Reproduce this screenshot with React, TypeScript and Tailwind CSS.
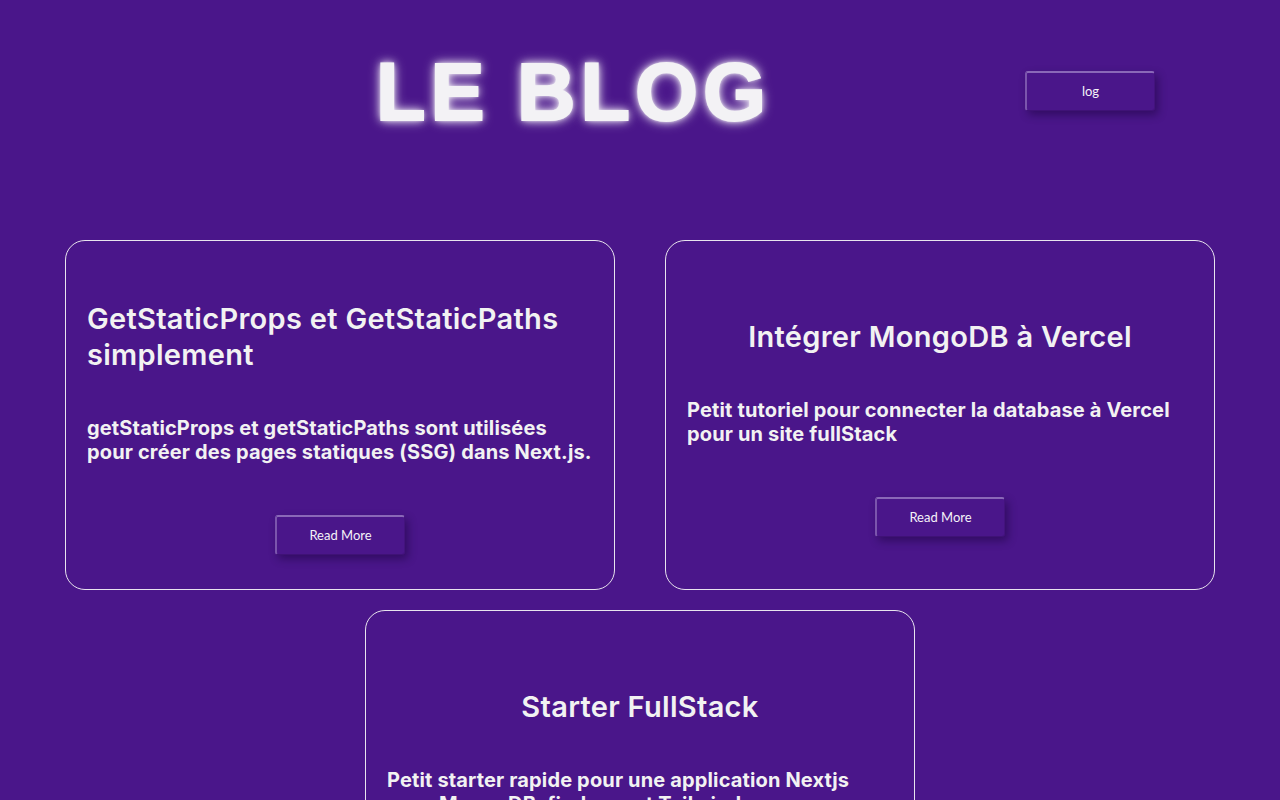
import React from "react";

const cards = [
  {
    title: "GetStaticProps et GetStaticPaths simplement",
    desc: "getStaticProps et getStaticPaths sont utilisées pour créer des pages statiques (SSG) dans Next.js.",
  },
  {
    title: "Intégrer MongoDB à Vercel",
    desc: "Petit tutoriel pour connecter la database à Vercel pour un site fullStack",
  },
  {
    title: "Starter FullStack",
    desc: "Petit starter rapide pour une application Nextjs avec MongoDB, firebase et Tailwind",
  },
];

function Btn({ label }: { label: string }) {
  return (
    <button className="w-[130px] h-[40px] pt-[2px] rounded-[3px] bg-[#4a168a] text-[#f4f2f8] text-[13px] font-['Lato',sans-serif] border-t-2 border-l-2 border-t-[#8a68b8] border-l-[#7b55ad] border-r border-b border-r-[#43137d] border-b-[#3f1276] shadow-[3px_4px_8px_rgba(20,0,50,0.45)]">
      {label}
    </button>
  );
}

export default function App() {
  return (
    <div className="min-h-[800px] bg-[#4a168a] text-[#f2f2f2] font-['Inter',sans-serif] overflow-hidden">
      <header className="h-[180px] flex items-center">
        <h1 className="ml-[376px] mt-[3px] text-[81px] leading-[80px] font-bold tracking-[5px] font-['Liberation_Sans',sans-serif] text-[#f3f2f5] [text-shadow:0_0_3px_#ffffff,0_0_8px_#ffffff,0_0_14px_rgba(255,255,255,0.6)] [-webkit-text-stroke:2px_#f3f2f5]">
          LE BLOG
        </h1>
        <div className="ml-auto mr-[125px] mt-[1px]">
          <Btn label="log" />
        </div>
      </header>
      <main className="mt-[60px] flex flex-wrap justify-center gap-x-[50px] gap-y-[20px]">
        {cards.map((c) => (
          <div
            key={c.title}
            className="w-[550px] h-[350px] border border-[#e8e4ee] rounded-[20px] px-[21px] pt-[25px] flex flex-col items-center justify-center"
          >
            <h2 className="text-[29px] leading-[36px] font-semibold tracking-[0.3px] text-left">{c.title}</h2>
            <p className="self-stretch mt-[43px] text-[20px] leading-[24px] font-bold tracking-[0.15px] text-left">{c.desc}</p>
            <div className="mt-[51px]">
              <Btn label="Read More" />
            </div>
          </div>
        ))}
      </main>
    </div>
  );
}
